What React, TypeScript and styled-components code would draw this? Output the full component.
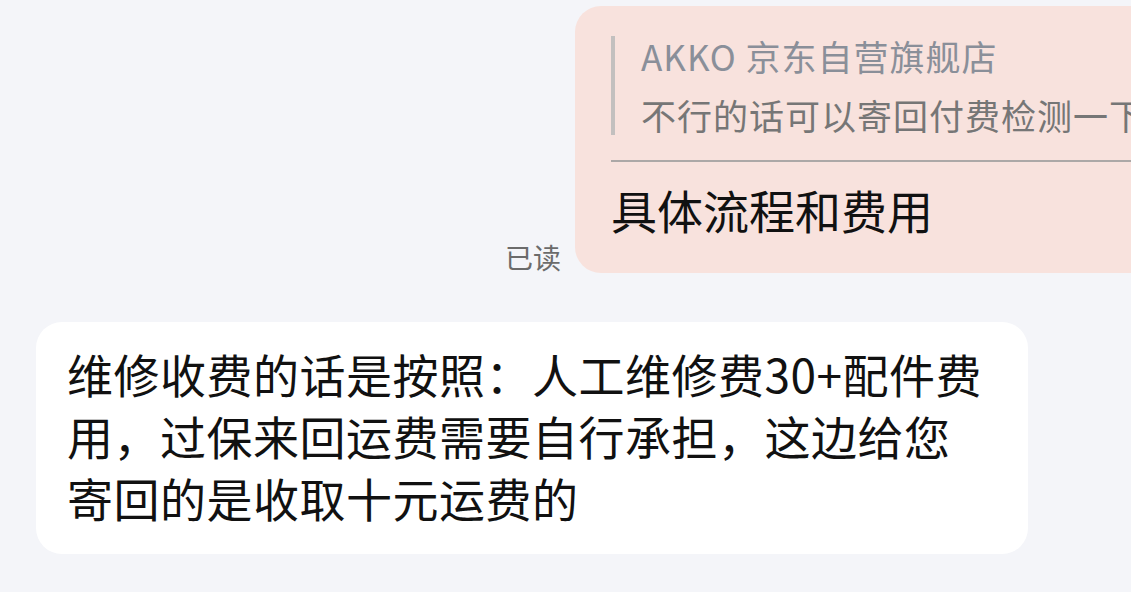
import styled, { createGlobalStyle } from "styled-components";

const GlobalStyle = createGlobalStyle`
  html, body {
    margin: 0;
    padding: 0;
    background: #f4f5f9;
    overflow: hidden;
  }
  body {
    width: 1131px;
    height: 592px;
    font-family: "Noto Sans CJK SC", "Noto Sans", sans-serif;
  }
`;

const Chat = styled.div`
  display: flex;
  flex-direction: column;
  gap: 49px;
  padding-top: 6px;
`;

const OutRow = styled.div`
  display: flex;
  align-items: flex-end;
  gap: 14px;
  padding-left: 505px;
`;

const ReadMark = styled.span`
  font-size: 28px;
  line-height: 32px;
  color: #6b6b6b;
  margin-bottom: 0;
  white-space: nowrap;
`;

const Bubble = styled.div<{ $tone: "pink" | "white" }>`
  background: ${(p) => (p.$tone === "pink" ? "#f8e2dd" : "#ffffff")};
  border-radius: 26px;
  color: #111;
`;

const OutBubble = styled(Bubble)`
  flex: 0 0 620px;
  padding: 30px 0 36px 36px;
  overflow: hidden;
`;

const Quote = styled.div`
  display: flex;
  flex-direction: column;
  gap: 19px;
  border-left: 4px solid #c3c0bf;
  padding-left: 26px;
  white-space: nowrap;
`;

const QuoteLine = styled.div<{ $muted?: boolean }>`
  font-size: 35px;
  line-height: 40px;
  letter-spacing: 1px;
  color: ${(p) => (p.$muted ? "#767676" : "#8a8f99")};
`;

const Divider = styled.div`
  height: 2px;
  background: #aca8a7;
  margin-top: 25px;
`;

const MainText = styled.div`
  font-size: 46px;
  line-height: 56px;
  margin-top: 19px;
  white-space: nowrap;
`;

const InRow = styled.div`
  display: flex;
  padding-left: 36px;
`;

const InBubble = styled(Bubble)`
  width: 992px;
  box-sizing: border-box;
  padding: 20px 40px 26px 31px;
  font-size: 46px;
  line-height: 62px;
  letter-spacing: 0.5px;
`;

export default function App() {
  return (
    <>
      <GlobalStyle />
      <Chat>
        <OutRow>
          <ReadMark>已读</ReadMark>
          <OutBubble $tone="pink">
            <Quote>
              <QuoteLine>AKKO 京东自营旗舰店</QuoteLine>
              <QuoteLine $muted>不行的话可以寄回付费检测一下</QuoteLine>
            </Quote>
            <Divider />
            <MainText>具体流程和费用</MainText>
          </OutBubble>
        </OutRow>
        <InRow>
          <InBubble $tone="white">
            维修收费的话是按照：人工维修费30+配件费用，过保来回运费需要自行承担，这边给您寄回的是收取十元运费的
          </InBubble>
        </InRow>
      </Chat>
    </>
  );
}
